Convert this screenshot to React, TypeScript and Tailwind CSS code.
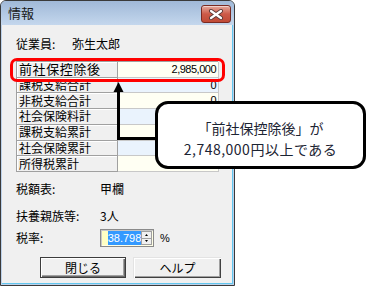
import React from "react";

const rows = [
  { label: "前社保控除後", value: "2,985,000", bg: "bg-[#fffff3]", first: true },
  { label: "課税支給合計", value: "0", bg: "bg-[#eaf3fd]" },
  { label: "非税支給合計", value: "0", bg: "bg-[#fffff3]" },
  { label: "社会保険料計", value: "", bg: "bg-[#eaf3fd]" },
  { label: "課税支給累計", value: "", bg: "bg-[#fffff3]" },
  { label: "社会保険累計", value: "", bg: "bg-[#eaf3fd]" },
  { label: "所得税累計", value: "", bg: "bg-[#fffff3]" },
];

export default function App() {
  return (
    <div className="relative w-[370px] h-[290px] bg-white overflow-hidden font-['Noto_Sans_CJK_JP',sans-serif] text-black">
      {/* Window */}
      <div className="w-[235px] h-[286px] border border-[#3a3a3a] rounded-t-[6px] bg-[#bcd1ea] flex flex-col overflow-hidden">
        {/* Title bar */}
        <div className="h-[24px] shrink-0 flex items-start justify-between bg-gradient-to-b from-[#a0b9d8] to-[#c4d7ed]">
          <span className="ml-[7px] mt-[4px] text-[13px] leading-[16px] text-[#1a1a1a]">情報</span>
          <div className="mt-[4px] mr-[3px] w-[30px] h-[18px] rounded-[3px] border border-[#7a2a22] bg-gradient-to-b from-[#e4a99e] via-[#cc5a48] to-[#c04a36] flex items-center justify-center shadow-[inset_0_1px_0_rgba(255,255,255,0.5)]">
            <svg width="16" height="11" viewBox="0 0 16 11">
              <path d="M3 2 L13 9 M13 2 L3 9" stroke="#5b3a38" strokeWidth="4" strokeLinecap="round" />
              <path d="M3 2 L13 9 M13 2 L3 9" stroke="#ffffff" strokeWidth="2.2" strokeLinecap="round" />
            </svg>
          </div>
        </div>
        {/* Body */}
        <div className="flex-1 mx-[1px] mb-[1px] bg-[#f0f0f0] border-r border-b border-[#62c6ee] flex flex-col pl-[14px] pt-[11px]">
          <div className="flex h-[16px] items-center text-[12px] leading-[16px]">
            <span className="w-[56px]">従業員:</span>
            <span>弥生太郎</span>
          </div>

          {/* Table */}
          <div className="mt-[9px] w-[202px] h-[111px] grid grid-cols-[101px_101px] grid-rows-7 border-t border-l border-[#a0a0a0]">
            {rows.map((r) => (
              <React.Fragment key={r.label}>
                <div
                  className={`bg-[#f0f0f0] border-b border-r border-[#a0a0a0] shadow-[inset_1px_1px_0_#ffffff] flex items-center pl-[2px] leading-[14px] whitespace-nowrap ${
                    r.first ? "text-[13px] tracking-[0.6px]" : "text-[12px]"
                  }`}
                >
                  {r.label}
                </div>
                <div
                  className={`${r.bg} border-b border-r border-[#c8c8c8] flex items-center justify-end pr-[2px] font-['Liberation_Sans',sans-serif] text-[11px] tracking-[-0.5px] leading-[13px]`}
                >
                  {r.value}
                </div>
              </React.Fragment>
            ))}
          </div>

          <div className="mt-[9px] flex h-[16px] items-center text-[12px] leading-[16px]">
            <span className="w-[84px]">税額表:</span>
            <span>甲欄</span>
          </div>
          <div className="mt-[11px] flex h-[16px] items-center text-[12px] leading-[16px]">
            <span className="w-[84px]">扶養親族等:</span>
            <span>3人</span>
          </div>
          <div className="mt-[5px] flex h-[18px] items-center text-[12px]">
            <span className="w-[84px]">税率:</span>
            <div className="w-[54px] h-[18px] border border-[#8a8a8a] shadow-[inset_1px_1px_0_#c8c8c8] bg-[#ffffe6] flex items-stretch p-[1px]">
              <div className="w-[6px] bg-[#ffffc4]" />
              <div className="w-[33px] bg-[#3399ff] text-white font-['Liberation_Sans',sans-serif] text-[11px] leading-[14px] flex items-center justify-center">
                38.798
              </div>
              <div className="flex-1 flex flex-col">
                <div className="flex-1 bg-[#f0f0f0] border border-[#a0a0a0] flex items-center justify-center">
                  <svg width="3" height="2" viewBox="0 0 3 2"><path d="M1.5 0 L3 2 L0 2 Z" fill="#000" /></svg>
                </div>
                <div className="flex-1 bg-[#f0f0f0] border border-t-0 border-[#a0a0a0] flex items-center justify-center">
                  <svg width="3" height="2" viewBox="0 0 3 2"><path d="M0 0 L3 0 L1.5 2 Z" fill="#000" /></svg>
                </div>
              </div>
            </div>
            <span className="ml-[6px] font-['Liberation_Sans',sans-serif] text-[11px]">%</span>
          </div>

          <div className="mt-[10px] ml-[24px] flex gap-[7px]">
            <div className="w-[86px] h-[21px] border border-[#3c3c3c] bg-[#f0f0f0] shadow-[inset_1px_1px_0_#ffffff,inset_-1px_-1px_0_#696969,inset_-2px_-2px_0_#a0a0a0] flex items-center justify-center text-[12px] leading-[14px]">
              閉じる
            </div>
            <div className="w-[88px] h-[21px] bg-[#f0f0f0] border-t border-l border-[#e3e3e3] shadow-[inset_1px_1px_0_#ffffff,inset_-1px_-1px_0_#404040,inset_-2px_-2px_0_#a0a0a0] flex items-center justify-center text-[12px] leading-[14px]">
              ヘルプ
            </div>
          </div>
        </div>
      </div>

      {/* Red highlight */}
      <div className="absolute left-[10px] top-[58px] w-[215px] h-[24px] border-[3px] border-[#ff0000] rounded-[7px]" />

      {/* Arrow */}
      <svg className="absolute left-0 top-0 pointer-events-none" width="370" height="290" viewBox="0 0 370 290">
        <path d="M160 138.5 L118.5 138.5 L118.5 90" fill="none" stroke="#000" strokeWidth="3" />
        <path d="M118.5 82 L113.5 92 L123.5 92 Z" fill="#000" />
      </svg>

      {/* Callout */}
      <div className="absolute left-[155px] top-[101px] w-[211px] h-[68px] bg-white border-[3px] border-black rounded-[13px] flex flex-col items-center pt-[14px] text-[14px] leading-[21px] text-[#1c2433]">
        <span>「前社保控除後」が</span>
        <span className="tracking-[0.5px]">2,748,000円以上である</span>
      </div>
    </div>
  );
}
